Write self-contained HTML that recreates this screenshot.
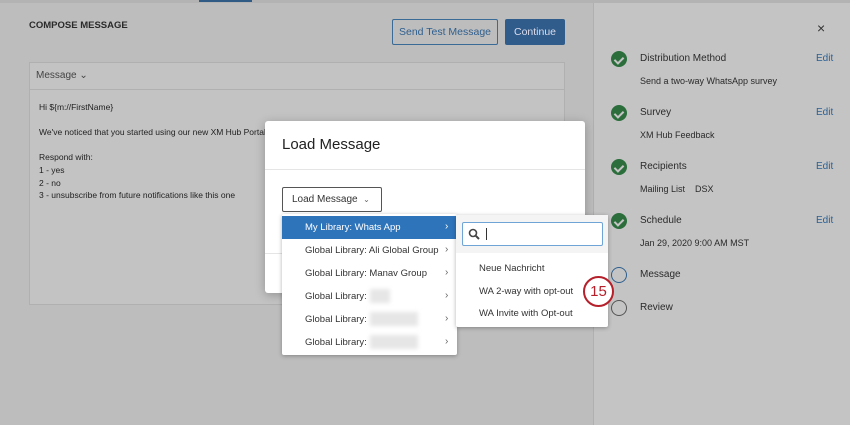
<!DOCTYPE html>
<html><head><style>
*{box-sizing:border-box;margin:0;padding:0}
body{width:850px;height:425px;overflow:hidden;background:#bdbdbd;font-family:"Liberation Sans",sans-serif;position:relative;color:#222}
.a{position:absolute}
.t{font-size:10px;color:#2a2a2a;white-space:nowrap}
.ck{position:absolute;left:611px;width:16px;height:16px;border-radius:50%;background:#2b6e3c}
.ck:after{content:"";position:absolute;left:5px;top:3.5px;width:4px;height:7px;border:solid #c4c4c4;border-width:0 2px 2px 0;transform:rotate(45deg)}
.edit{position:absolute;left:816px;font-size:10px;color:#2a5f92}
.mi{position:absolute;left:23px;font-size:9.5px;color:#333;white-space:nowrap}
.ar{position:absolute;left:163px;font-size:10px;color:#666}
.blur{position:absolute;background:#e6e6e6;filter:blur(2px)}
</style></head><body>
<div class="a" style="left:0;top:0;width:850px;height:3px;background:#b3b3b3"></div>
<div class="a" style="left:199px;top:0;width:53px;height:2px;background:#2f5b85"></div>
<div class="a t" style="left:29px;top:20px;font-weight:bold;font-size:9.5px">COMPOSE MESSAGE</div>
<div class="a" style="left:392px;top:19px;width:106px;height:26px;border:1px solid #3a6a96;border-radius:2px;color:#2f5f8e;font-size:10.5px;text-align:center;line-height:24px">Send Test Message</div>
<div class="a" style="left:505px;top:19px;width:60px;height:26px;background:#2f5c8a;border-radius:2px;color:#dde;font-size:10.5px;text-align:center;line-height:26px">Continue</div>
<div class="a" style="left:29px;top:62px;width:536px;height:243px;background:#c3c3c3;border:1px solid #b0b0b0"></div>
<div class="a" style="left:29px;top:89px;width:536px;height:1px;background:#b0b0b0"></div>
<div class="a t" style="left:36px;top:70px;color:#444">Message &#8964;</div>
<div class="a" style="left:39px;top:101px;font-size:8.5px;line-height:12.6px;color:#222;white-space:pre">Hi ${m://FirstName}

We've noticed that you started using our new XM Hub Portal

Respond with:
1 - yes
2 - no
3 - unsubscribe from future notifications like this one</div>
<!-- right panel -->
<div class="a" style="left:593px;top:3px;width:257px;height:422px;background:#c4c4c4;border-left:1px solid #b0b0b0"></div>
<div class="a" style="left:817px;top:20px;font-size:14px;color:#333">×</div>
<div class="ck" style="top:51px"></div><div class="a t" style="left:640px;top:53px">Distribution Method</div><div class="edit" style="top:53px">Edit</div>
<div class="a t" style="left:640px;top:76px;font-size:9px">Send a two-way WhatsApp survey</div>
<div class="ck" style="top:105px"></div><div class="a t" style="left:640px;top:107px">Survey</div><div class="edit" style="top:107px">Edit</div>
<div class="a t" style="left:640px;top:130px;font-size:9px">XM Hub Feedback</div>
<div class="ck" style="top:159px"></div><div class="a t" style="left:640px;top:161px">Recipients</div><div class="edit" style="top:161px">Edit</div>
<div class="a t" style="left:640px;top:184px;font-size:9px">Mailing List &nbsp;&nbsp;&nbsp;DSX</div>
<div class="ck" style="top:213px"></div><div class="a t" style="left:640px;top:215px">Schedule</div><div class="edit" style="top:215px">Edit</div>
<div class="a t" style="left:640px;top:238px;font-size:9px">Jan 29, 2020 9:00 AM MST</div>
<div class="a" style="left:611px;top:267px;width:16px;height:16px;border-radius:50%;border:1.5px solid #2f5f8e"></div><div class="a t" style="left:640px;top:269px">Message</div>
<div class="a" style="left:611px;top:300px;width:16px;height:16px;border-radius:50%;border:1.5px solid #555"></div><div class="a t" style="left:640px;top:302px">Review</div>
<!-- modal -->
<div class="a" style="left:265px;top:121px;width:320px;height:172px;background:#fff;border-radius:3px;box-shadow:0 2px 10px rgba(0,0,0,.25)"></div>
<div class="a" style="left:282px;top:136px;font-size:15px;color:#222">Load Message</div>
<div class="a" style="left:265px;top:169px;width:320px;height:1px;background:#e5e5e5"></div>
<div class="a" style="left:265px;top:253px;width:320px;height:1px;background:#e5e5e5"></div>
<div class="a" style="left:282px;top:187px;width:100px;height:25px;border:1px solid #555;border-radius:2px;font-size:10px;line-height:23px;padding-left:9px;color:#333">Load Message &nbsp;<span style="font-size:8px;color:#666">&#8964;</span></div>
<div class="a" style="left:282px;top:214px;width:175px;height:141px;background:#fff;box-shadow:0 1px 4px rgba(0,0,0,.3);border-radius:2px">
<div class="a" style="left:0;top:2px;width:175px;height:23px;background:#2e74bb"></div>
<div class="mi" style="top:8px;color:#fff">My Library: Whats App</div><div class="ar" style="top:7px;color:#fff">›</div>
<div class="mi" style="top:31px">Global Library: Ali Global Group</div><div class="ar" style="top:30px">›</div>
<div class="mi" style="top:54px">Global Library: Manav Group</div><div class="ar" style="top:53px">›</div>
<div class="mi" style="top:77px">Global Library:</div><div class="blur" style="left:88px;top:75px;width:20px;height:14px"></div><div class="ar" style="top:76px">›</div>
<div class="mi" style="top:100px">Global Library:</div><div class="blur" style="left:88px;top:98px;width:48px;height:14px"></div><div class="ar" style="top:99px">›</div>
<div class="mi" style="top:123px">Global Library:</div><div class="blur" style="left:88px;top:121px;width:48px;height:14px"></div><div class="ar" style="top:122px">›</div>
</div>
<div class="a" style="left:456px;top:215px;width:152px;height:112px;background:#fff;box-shadow:0 1px 4px rgba(0,0,0,.3);border-radius:2px">
<div class="a" style="left:0;top:0;width:152px;height:38px;background:#f4f4f4"></div>
<div class="a" style="left:6px;top:7px;width:141px;height:24px;background:#fff;border:1px solid #6fa4d6;border-radius:2px">
<svg class="a" style="left:5px;top:5px" width="13" height="13" viewBox="0 0 13 13"><circle cx="5" cy="5" r="3.5" fill="none" stroke="#444" stroke-width="1.6"/><path d="M7.7 7.7L11 11" stroke="#444" stroke-width="2"/></svg>
<div class="a" style="left:23px;top:5px;width:1px;height:12px;background:#333"></div></div>
<div class="mi" style="top:48px">Neue Nachricht</div>
<div class="mi" style="top:71px">WA 2-way with opt-out</div>
<div class="mi" style="top:93px">WA Invite with Opt-out</div>
</div>
<div class="a" style="left:583px;top:276px;width:31px;height:31px;border-radius:50%;border:2px solid #b5202a;background:#fff;color:#b5202a;font-size:15px;text-align:center;line-height:27px">15</div>
</body></html>
